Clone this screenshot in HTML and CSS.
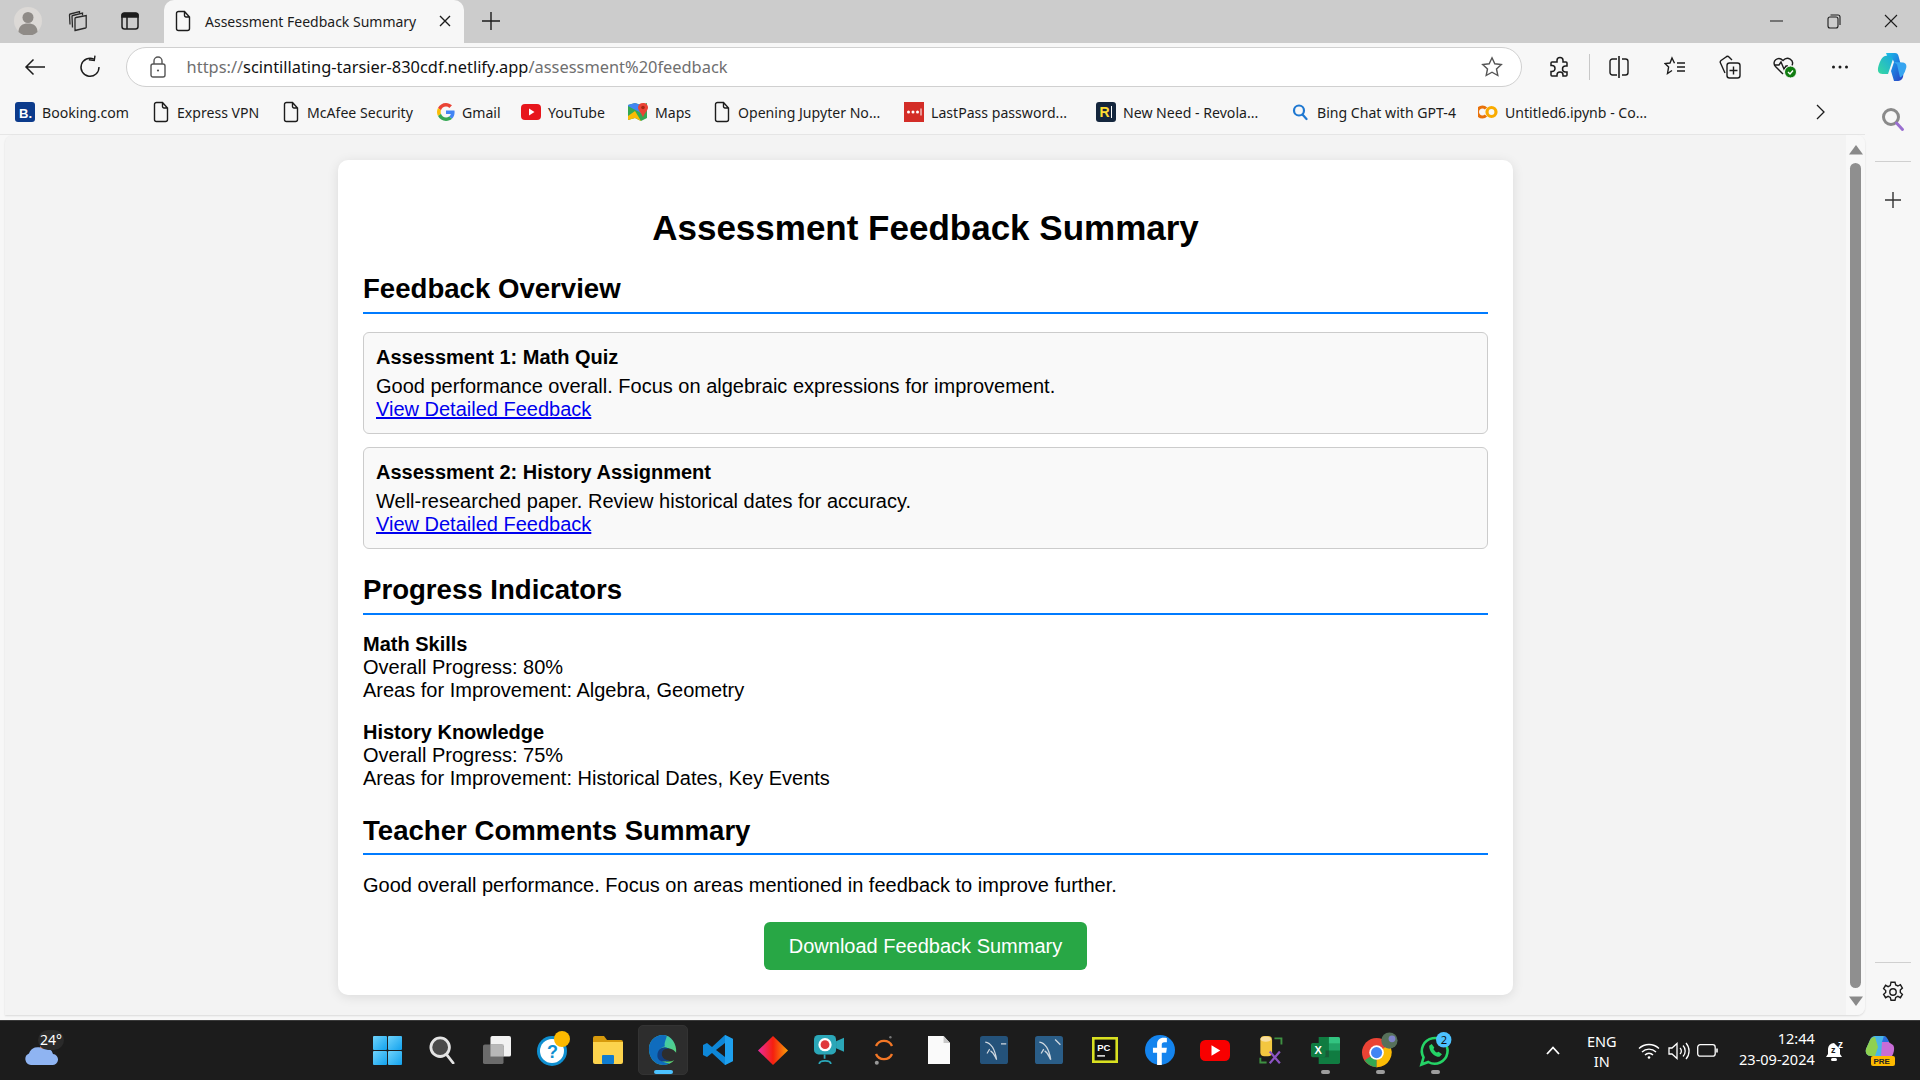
FILE: index.html
```html
<!DOCTYPE html>
<html lang="en">
<head>
<meta charset="utf-8">
<title>Assessment Feedback Summary</title>
<link rel="stylesheet" href="styles.css">
</head>
<body>
<svg class="defs" width="0" height="0" aria-hidden="true">
  <defs>
    <symbol id="doc" viewBox="0 0 18 22"><path d="M2.500 3.500a2 2 0 0 1 2-2h6l5 5.500v11.500a2 2 0 0 1-2 2h-9a2 2 0 0 1-2-2zM10.500 1.500v4a1.500 1.500 0 0 0 1.500 1.500h3.500" fill="none" stroke="#1c1c1c" stroke-width="1.400"/></symbol>
    <linearGradient id="cop" x1="0" y1="0" x2="1" y2="1"><stop offset="0" stop-color="#19c3e8"/><stop offset=".5" stop-color="#1f7fe0"/><stop offset="1" stop-color="#2a3fc0"/></linearGradient>
    <linearGradient id="cop2" x1="0" y1="1" x2="1" y2="0"><stop offset="0" stop-color="#38d9a0"/><stop offset="1" stop-color="#18a8e0"/></linearGradient>
    <linearGradient id="edge" x1="0" y1="0" x2="1" y2="1"><stop offset="0" stop-color="#2ec4d6"/><stop offset="1" stop-color="#63d463"/></linearGradient>
    <linearGradient id="rhomb" x1="0" y1="0" x2="1" y2="0"><stop offset="0" stop-color="#e92ba0"/><stop offset=".5" stop-color="#f5200f"/><stop offset="1" stop-color="#f8a008"/></linearGradient>
    <linearGradient id="win" x1="0" y1="0" x2="1" y2="1"><stop offset="0" stop-color="#6fd3fb"/><stop offset="1" stop-color="#12a2ee"/></linearGradient>
  </defs>
</svg>
<div class="window">
  <header class="tabstrip">
    <span class="strip-btn profile"><svg width="28" height="28" viewBox="0 0 28 28"><circle cx="14" cy="14" r="14" fill="#dcd9d6"/><circle cx="14" cy="10.500" r="5.500" fill="#8f8b87"/><path d="M4.500 25c0-6 4-8.500 9.500-8.500s9.500 2.500 9.500 8.500a14 14 0 0 1-19 0z" fill="#8f8b87"/></svg></span>
    <span class="strip-btn"><svg width="22" height="22" viewBox="0 0 22 22" fill="none" stroke="#2a2a2a" stroke-width="1.300"><path d="M8 20.500l10.500-2.500a1 1 0 0 0 .7-1.200V5.500L9 7.500a1 1 0 0 0-1 1z"/><path d="M5.500 17.500L5 6.500a1 1 0 0 1 .8-1L15.500 3v2.500"/><path d="M3 14.500L2.500 5a1 1 0 0 1 .8-1L12.500 1.500V3"/></svg></span>
    <span class="strip-btn"><svg width="20" height="20" viewBox="0 0 20 20" fill="none" stroke="#1c1c1c" stroke-width="1.500"><rect x="2" y="2" width="16" height="16" rx="2.500"/><path d="M2 4.500a2 2 0 0 1 2-2h12a2 2 0 0 1 2 2V6H2z" fill="#1c1c1c"/><path d="M7 6v12"/></svg></span>
    <div class="tab">
      <svg class="tab-doc" width="18" height="22"><use href="#doc"/></svg>
      <span class="tab-title">Assessment Feedback Summary</span>
      <svg class="tab-x" width="12" height="12" viewBox="0 0 12 12" stroke="#1c1c1c" stroke-width="1.400"><path d="M1 1l10 10M11 1L1 11"/></svg>
    </div>
    <svg class="tab-new" width="18" height="18" viewBox="0 0 18 18" stroke="#1c1c1c" stroke-width="1.400"><path d="M9 0v18M0 9h18"/></svg>
    <div class="winctl">
      <span class="winbtn"><svg width="13" height="2" viewBox="0 0 13 2" stroke="#1c1c1c"><path d="M0 1h13"/></svg></span>
      <span class="winbtn"><svg width="14" height="15" viewBox="0 0 14 15" fill="none" stroke="#1c1c1c" stroke-width="1.100"><rect x="1" y="3" width="10" height="11" rx="2"/><path d="M3.500 1h7.500a2 2 0 0 1 2 2v8"/></svg></span>
      <span class="winbtn"><svg width="14" height="14" viewBox="0 0 14 14" stroke="#1c1c1c" stroke-width="1.100"><path d="M1 1l12 12M13 1L1 13"/></svg></span>
    </div>
  </header>

  <nav class="toolbar">
    <span class="tool"><svg width="22" height="18" viewBox="0 0 22 18" fill="none" stroke="#1c1c1c" stroke-width="1.500"><path d="M21 9H2M9.500 1.500L2 9l7.500 7.500"/></svg></span>
    <span class="tool"><svg width="22" height="24" viewBox="0 0 22 24" fill="none" stroke="#1c1c1c" stroke-width="1.400"><path d="M15 4.200A9 9 0 1 0 20 12"/><path d="M15.500 .5v5h-5.500" transform="rotate(8 15 4)"/></svg></span>
    <div class="address">
      <svg class="lock" width="16" height="22" viewBox="0 0 16 22" fill="none" stroke="#555" stroke-width="1.400"><rect x="1" y="8" width="14" height="13" rx="2"/><path d="M4 8V5a4 4 0 0 1 8 0v3"/><circle cx="8" cy="14.500" r="1.100" fill="#555" stroke="none"/></svg>
      <span class="url"><span class="dim">https://</span>scintillating-tarsier-830cdf.netlify.app<span class="dim">/assessment%20feedback</span></span>
      <svg class="star" width="22" height="22" viewBox="0 0 22 22" fill="none" stroke="#555" stroke-width="1.400"><path d="M11 1.800l2.800 6 6.500.8-4.800 4.400 1.300 6.500-5.800-3.300-5.800 3.300 1.300-6.500L1.700 8.600l6.500-.8z"/></svg>
    </div>
    <span class="tool ext"><svg width="22" height="24" viewBox="0 0 22 24" fill="none" stroke="#1c1c1c" stroke-width="1.500"><path d="M4 7h5V5.500a3 3 0 0 1 6 0V7h3a1 1 0 0 1 1 1v3h-1.500a3 3 0 0 0 0 6H19v3a1 1 0 0 1-1 1h-3v-1a3 3 0 0 0-6 0v1H4a1 1 0 0 1-1-1v-3.500h1a3 3 0 0 0 0-6H3V8a1 1 0 0 1 1-1z"/></svg></span>
    <span class="tool-sep"></span>
    <span class="tool"><svg width="20" height="22" viewBox="0 0 20 22" fill="none" stroke="#1c1c1c" stroke-width="1.400"><path d="M8 3H3.500A2.500 2.500 0 0 0 1 5.500v11A2.500 2.500 0 0 0 3.500 19H8"/><path d="M10 0v22" stroke-width="1.600"/><path d="M13 3h3.500A2.500 2.500 0 0 1 19 5.500v11a2.500 2.500 0 0 1-2.500 2.500H13"/></svg></span>
    <span class="tool"><svg width="22" height="22" viewBox="0 0 22 22" fill="none" stroke="#1c1c1c" stroke-width="1.400"><path d="M10.500 7.200L8 2 6 7l-5 .6 3.600 3.400-1.100 6.500 4.500-3"/><path d="M13 7h8M13 11h8M13 15h8"/></svg></span>
    <span class="tool"><svg width="22" height="24" viewBox="0 0 22 24" fill="none" stroke="#1c1c1c" stroke-width="1.400"><rect x="8" y="8" width="13" height="15" rx="2.500"/><path d="M14.500 11.500v8M10.500 15.500h8"/><path d="M13 5L10 2a2 2 0 0 0-3 0L2 5.500a2 2 0 0 0-.5 2.500L6 18"/></svg></span>
    <span class="tool"><svg width="26" height="26" viewBox="0 0 26 26" fill="none" stroke="#1c1c1c" stroke-width="1.400"><path d="M11 20l-7.500-7.500c-4.500-5 2.500-11 7.500-6 4.500-5 11.500-.5 9 5"/><path d="M2 11h5l2-3 3 7 2-3h2"/><circle cx="18.500" cy="18" r="6" fill="#107c10" stroke="#f7f7f7" stroke-width="1"/><path d="M16 18l2 2 3-3.500" stroke="#fff"/></svg></span>
    <span class="tool"><svg width="18" height="4" viewBox="0 0 18 4" fill="#1c1c1c"><circle cx="2.500" cy="2" r="1.500"/><circle cx="9" cy="2" r="1.500"/><circle cx="15.500" cy="2" r="1.500"/></svg></span>
    <span class="tool copilot"><svg width="32" height="32" viewBox="0 0 32 32"><path d="M11 2h9c2 0 3 1.200 3.500 3L28 22c1 4-1 8-5 8h-4l-3-10 3-9c-1-3-3-4-6-4z" fill="url(#cop)"/><path d="M10 5C7 6 5 10 3.500 15c-1.500 5 0 8 4 8h5.500l3-9 2-6c-1-3-5-4.500-8-3z" fill="url(#cop2)"/><path d="M19 11l9 .5c3 .500 4 3 3 6-1.500 5-3.500 8-6 9l-3-13z" fill="#37a5f0"/></svg></span>
  </nav>

  <div class="body-row">
    <div class="page-col">
      <nav class="bookmarks">
        <a class="bm"><svg width="20" height="20" viewBox="0 0 20 20"><rect width="20" height="20" rx="3" fill="#0c3b8c"/><text x="4" y="15.500" class="fav-b">B.</text></svg><span>Booking.com</span></a>
        <a class="bm"><svg width="18" height="22"><use href="#doc"/></svg><span>Express VPN</span></a>
        <a class="bm"><svg width="18" height="22"><use href="#doc"/></svg><span>McAfee Security</span></a>
        <a class="bm"><svg width="18" height="18" viewBox="0 0 48 48"><path fill="#EA4335" d="M24 9.500c3.500 0 6.600 1.200 9.100 3.600l6.800-6.800C35.800 2.500 30.300 0 24 0 14.600 0 6.500 5.400 2.600 13.200l7.900 6.200C12.400 13.700 17.700 9.500 24 9.500z"/><path fill="#4285F4" d="M46.900 24.500c0-1.600-.1-3.100-.4-4.500H24v9h12.900c-.6 3-2.200 5.500-4.800 7.200l7.700 6c4.500-4.200 7.100-10.300 7.100-17.700z"/><path fill="#FBBC05" d="M10.500 28.600c-.5-1.400-.8-3-.8-4.600s.3-3.200.8-4.600l-7.900-6.200C.9 16.500 0 20.100 0 24s.9 7.500 2.600 10.800z"/><path fill="#34A853" d="M24 48c6.500 0 11.900-2.100 15.900-5.800l-7.700-6c-2.200 1.500-4.900 2.300-8.100 2.300-6.300 0-11.600-4.200-13.500-9.900l-7.900 6.200C6.500 42.600 14.600 48 24 48z"/></svg><span>Gmail</span></a>
        <a class="bm"><svg width="20" height="16" viewBox="0 0 20 16"><rect width="20" height="16" rx="4" fill="#e7161c"/><path d="M8 4.500l5.500 3.500L8 11.500z" fill="#fff"/></svg><span>YouTube</span></a>
        <a class="bm"><svg width="20" height="20" viewBox="0 0 20 20"><path d="M0 3l7-2 6 2 6-2v15l-6 3-6-3-7 2z" fill="#34a853"/><path d="M7 1l6 2v8L0 4V3z" fill="#4285f4"/><path d="M0 14l7-5 6 10-6-3-7 2z" fill="#fbbc05"/><path d="M15 1c-3 0-5 2-5 4.500 0 3 4 6 5 10 1-4 5-7 5-10C20 3 18 1 15 1z" fill="#ea4335"/><circle cx="15" cy="5.500" r="1.800" fill="#a52714"/></svg><span>Maps</span></a>
        <a class="bm"><svg width="18" height="22"><use href="#doc"/></svg><span>Opening Jupyter No...</span></a>
        <a class="bm"><svg width="20" height="20" viewBox="0 0 20 20"><rect width="20" height="20" fill="#d32d27"/><g fill="#fff"><circle cx="4.500" cy="10" r="1.500"/><circle cx="9" cy="10" r="1.500"/><circle cx="13.500" cy="10" r="1.500"/><rect x="16.500" y="6.500" width="1" height="7"/></g></svg><span>LastPass password...</span></a>
        <a class="bm"><svg width="20" height="20" viewBox="0 0 20 20"><rect width="20" height="20" rx="3" fill="#14263d"/><text x="3.500" y="15" class="fav-r">R</text><rect x="15" y="4" width="1" height="12" fill="#fff"/></svg><span>New Need - Revola...</span></a>
        <a class="bm"><svg width="16" height="18" viewBox="0 0 16 18" fill="none" stroke="#1f78d1" stroke-width="2.200"><circle cx="7" cy="7.500" r="5"/><path d="M10.500 11.500L14.500 16" stroke-linecap="round"/></svg><span class="bing">Bing Chat with GPT-4</span></a>
        <a class="bm"><svg width="20" height="14" viewBox="0 0 20 14" fill="none" stroke-width="3.200"><path d="M8 3.500a5 5 0 1 0 0 7" stroke="#e8710a"/><circle cx="13.500" cy="7" r="4.500" stroke="#f9ab00"/></svg><span>Untitled6.ipynb - Co...</span></a>
        <svg class="bm-more" width="10" height="16" viewBox="0 0 10 16" fill="none" stroke="#1c1c1c" stroke-width="1.300"><path d="M1 1l7 7-7 7"/></svg>
      </nav>
      <main class="viewport">
        <div class="content">
          <article class="card">
            <h1>Assessment Feedback Summary</h1>
            <section class="overview">
              <h2>Feedback Overview</h2>
              <div class="item">
                <h3>Assessment 1: Math Quiz</h3>
                <p>Good performance overall. Focus on algebraic expressions for improvement.</p>
                <a class="link" href="#">View Detailed Feedback</a>
              </div>
              <div class="item">
                <h3>Assessment 2: History Assignment</h3>
                <p>Well-researched paper. Review historical dates for accuracy.</p>
                <a class="link" href="#">View Detailed Feedback</a>
              </div>
            </section>
            <section class="progress">
              <h2>Progress Indicators</h2>
              <div class="skill">
                <strong>Math Skills</strong>
                <span>Overall Progress: 80%</span>
                <span>Areas for Improvement: Algebra, Geometry</span>
              </div>
              <div class="skill">
                <strong>History Knowledge</strong>
                <span>Overall Progress: 75%</span>
                <span>Areas for Improvement: Historical Dates, Key Events</span>
              </div>
            </section>
            <section class="comments">
              <h2>Teacher Comments Summary</h2>
              <p>Good overall performance. Focus on areas mentioned in feedback to improve further.</p>
            </section>
            <div class="actions"><button class="download" type="button">Download Feedback Summary</button></div>
          </article>
        </div>
        <div class="scrollbar">
          <svg width="14" height="10" viewBox="0 0 14 10" fill="#8a8a8a"><path d="M7 0l7 9.500H0z"/></svg>
          <span class="thumb"></span>
          <svg width="14" height="10" viewBox="0 0 14 10" fill="#8a8a8a"><path d="M7 10L0 .5h14z"/></svg>
        </div>
      </main>
    </div>
    <aside class="sidebar">
      <svg class="side-search" width="24" height="26" viewBox="0 0 24 26" fill="none" stroke-width="3"><circle cx="10" cy="10" r="7.500" stroke="#8a8a8a"/><path d="M15.500 16l6 6.500" stroke="#9a6fd0" stroke-linecap="round"/></svg>
      <span class="side-line"></span>
      <svg class="side-plus" width="16" height="16" viewBox="0 0 16 16" stroke="#333" stroke-width="1.400"><path d="M8 0v16M0 8h16"/></svg>
      <span class="side-line bottom"></span>
      <svg class="side-gear" width="22" height="22" viewBox="0 0 22 22" fill="none" stroke="#1c1c1c" stroke-width="1.400"><path d="M9 1.200h4l.7 2.800 2.200 1 2.500-1.300 2 3.400-2.100 1.900v2.400l2.100 1.900-2 3.400-2.500-1.300-2.200 1-.7 2.800H9l-.7-2.800-2.200-1-2.500 1.300-2-3.400 2.100-1.900V9.600L1.600 7.700l2-3.400 2.500 1.300 2.200-1z"/><circle cx="11" cy="11" r="3.200"/></svg>
    </aside>
  </div>

  <footer class="taskbar">
    <div class="weather">
      <svg width="34" height="32" viewBox="0 0 34 32"><rect x="16" y="8" width="10" height="8" fill="#d8641a"/><path d="M7 29a6 6 0 0 1-2-11.500A9 9 0 0 1 19 13a7 7 0 0 1 10 5 5.500 5.500 0 0 1-1 11z" fill="#8fb4f2"/></svg>
      <span class="temp">24°</span>
    </div>
    <div class="apps">
      <span class="app"><svg width="29" height="29" viewBox="0 0 30 30" fill="url(#win)"><rect width="14.500" height="14.500" rx="1"/><rect x="15.500" width="14.500" height="14.500" rx="1"/><rect y="15.500" width="14.500" height="14.500" rx="1"/><rect x="15.500" y="15.500" width="14.500" height="14.500" rx="1"/></svg></span>
      <span class="app"><svg width="26" height="28" viewBox="0 0 28 30" fill="none" stroke="#e4e4e4" stroke-width="3"><circle cx="12" cy="12" r="10" fill="#4a4a4a"/><path d="M19 20l7 9" stroke-linecap="round"/></svg></span>
      <span class="app"><svg width="30" height="28" viewBox="0 0 30 30"><rect x="8" width="22" height="22" rx="2" fill="#f2f2f2"/><rect y="9" width="22" height="21" rx="2" fill="#6b6b6b"/><rect x="8" y="9" width="14" height="13" fill="#b8b8b8"/></svg></span>
      <span class="app"><svg width="38" height="38" viewBox="0 0 38 38"><circle cx="18" cy="20" r="15" fill="#0f8fd0"/><circle cx="18" cy="20" r="12" fill="#fff"/><text x="13" y="27" class="help">?</text><circle cx="28" cy="8" r="8" fill="#fdb900"/></svg></span>
      <span class="app"><svg width="30" height="28" viewBox="0 0 30 28"><path d="M0 2a2 2 0 0 1 2-2h9l3 4h14a2 2 0 0 1 2 2v3H0z" fill="#d79a0c"/><path d="M0 6h30v20a2 2 0 0 1-2 2H2a2 2 0 0 1-2-2z" fill="#fcd34d"/><rect x="9" y="19" width="12" height="9" rx="1" fill="#0f7cd0"/></svg></span>
      <span class="app active"><svg width="30" height="30" viewBox="0 0 30 32"><path d="M15 0C6 0 0 7 0 15c0 9 6 17 15 17 5 0 9-2 12-5-9 4-17-2-14-9 1-3 4-5 8-4 4 .500 7 3 8 5 1-9-5-19-14-19z" fill="url(#edge)"/><path d="M15 0C6 0 0 7 0 15c0 9 6 17 15 17 3 0 5-1 7-2-8 0-14-5-11-13 1-3 3-4 6-5C16 8 18 6 19 1c-1-.500-3-1-4-1z" fill="#0f6cbd"/><path d="M9 22c0-6 4-9 8-9 2 0 3 1 4 2-5-1-8 2-7 7 1 3 4 5 8 5-6 3-13 1-13-5z" fill="#123f80"/></svg><i class="dot blue"></i></span>
      <span class="app"><svg width="30" height="30" viewBox="0 0 30 30"><path d="M22 0l8 4v22l-8 4L9 18l-5 4-4-2V10l4-2 5 4z" fill="#0e87d8"/><path d="M22 0l8 4v22l-8 4z" fill="#1ea0ee"/><path d="M22 8L13 15l9 7z" fill="#1c1c1c"/></svg></span>
      <span class="app"><svg width="30" height="29" viewBox="0 0 30 44" preserveAspectRatio="none"><path d="M15 0l15 22-15 22L0 22z" fill="url(#rhomb)"/></svg></span>
      <span class="app"><svg width="30" height="30" viewBox="0 0 34 34"><rect width="25" height="22" rx="5" fill="#2ba7b8"/><path d="M25 7l9-4v16l-9-4z" fill="#2ba7b8"/><circle cx="12.500" cy="11" r="7.500" fill="#fff"/><circle cx="12.500" cy="11" r="5" fill="#e0393c"/><path d="M12 22v5M6 33c0-5 13-5 13 0" stroke="#2ba7b8" stroke-width="2" fill="none"/></svg></span>
      <span class="app"><svg width="22" height="32" viewBox="0 0 26 40" fill="none"><path d="M3 15a11 11 0 0 1 20 0" stroke="#f37726" stroke-width="3"/><path d="M3 25a11 11 0 0 0 20 0" stroke="#f37726" stroke-width="3"/><circle cx="21" cy="4" r="1.500" fill="#777"/><circle cx="4" cy="36" r="2.500" fill="#999"/></svg></span>
      <span class="app"><svg width="22" height="28" viewBox="0 0 24 28" preserveAspectRatio="none"><path d="M0 0h17l7 7v21H0z" fill="#fafafa"/><path d="M17 0l7 7h-7z" fill="#c8c8c8"/></svg></span>
      <span class="app"><svg width="28" height="28" viewBox="0 0 32 32"><rect width="32" height="32" rx="3" fill="#24527a"/><path d="M6 7c7 1 11 8 13 20-2-3-3-8-7-10M11 15l-3 5M24 9h6" stroke="#cfd8e0" stroke-width="1.300" fill="none"/></svg></span>
      <span class="app"><svg width="28" height="28" viewBox="0 0 32 32"><rect width="32" height="32" rx="3" fill="#2a5d87"/><path d="M5 7c7 1 11 8 13 20-2-3-3-8-7-10M10 15l-3 5M23 4l6 6" stroke="#cfd8e0" stroke-width="1.500" fill="none"/></svg></span>
      <span class="app"><svg width="26" height="26" viewBox="0 0 30 30"><rect width="30" height="30" fill="#d8e021"/><rect x="3" y="3" width="24" height="24" fill="#111"/><text x="6" y="16" class="pc">PC</text><rect x="6" y="21" width="9" height="1.600" fill="#fff"/></svg></span>
      <span class="app"><svg width="30" height="30" viewBox="0 0 34 34"><circle cx="17" cy="17" r="17" fill="#1484ee"/><path d="M19 34V20h5l.8-5.500H19V11c0-1.600.7-2.800 3-2.800h2.800V3.400C24 3.200 22.500 3 21 3c-4.400 0-7.300 2.700-7.300 7.400v4.100H9V20h4.700v14z" fill="#fff"/></svg></span>
      <span class="app"><svg width="30" height="21" viewBox="0 0 34 24" preserveAspectRatio="none"><rect width="34" height="24" rx="6" fill="#f80000"/><path d="M13 6l10 6-10 6z" fill="#fff"/></svg></span>
      <span class="app"><svg width="25" height="28" viewBox="0 0 32 36" preserveAspectRatio="none"><path d="M21 3h9v8M3 28v6h8" stroke="#3e9142" stroke-width="2.400" fill="none"/><rect x="3" width="15" height="26" rx="5" fill="#f3c740"/><ellipse cx="10" cy="4" rx="7" ry="3.500" fill="#f8dfa0"/><path d="M15 20l13 15M28 20L15 35" stroke="#8c54c4" stroke-width="2.800"/></svg></span>
      <span class="app"><svg width="29" height="27" viewBox="0 0 34 32" preserveAspectRatio="none"><path d="M9 0h23a2 2 0 0 1 2 2v28a2 2 0 0 1-2 2H9z" fill="#107c41"/><path d="M21 0h11a2 2 0 0 1 2 2v6H21z" fill="#33c481"/><path d="M21 8h13v8H21z" fill="#21a366"/><path d="M9 16h12v8H9z" fill="#185c37"/><rect y="7" width="17" height="17" rx="2" fill="#107c41"/><text x="4" y="20.500" class="xl">X</text></svg><i class="dot"></i></span>
      <span class="app"><svg width="36" height="36" viewBox="0 0 42 42"><circle cx="17" cy="24" r="17" fill="#ea4335"/><path d="M17 24L32 15a17 17 0 0 1-15 26z" fill="#fbbc05"/><path d="M17 24l-14 9a17 17 0 0 0 14 8z" fill="#34a853"/><circle cx="17" cy="24" r="8.500" fill="#fff"/><circle cx="17" cy="24" r="6.500" fill="#4285f4"/><circle cx="32" cy="10" r="9.500" fill="#56705a"/><circle cx="35" cy="8" r="4" fill="#7e83c9"/></svg><i class="dot"></i></span>
      <span class="app"><svg width="36" height="36" viewBox="0 0 42 42" fill="none"><path d="M4 38l2.500-8.500A15 15 0 1 1 12 35z" stroke="#25d366" stroke-width="3"/><path d="M13 16c0 7 6 13 12 13l3-3-4-3-2 1c-2-1-3-3-4-4l1-2-3-4z" fill="#25d366"/><circle cx="30" cy="9" r="9" fill="#4cc2ff"/><text x="26.500" y="14" class="badge">2</text></svg><i class="dot"></i></span>
    </div>
    <div class="tray">
      <svg class="chev" width="14" height="9" viewBox="0 0 14 9" fill="none" stroke="#fff" stroke-width="1.800"><path d="M1 8l6-6.500L13 8"/></svg>
      <div class="lang"><span>ENG</span><span>IN</span></div>
      <svg class="t-wifi" width="22" height="16" viewBox="0 0 22 16" fill="none" stroke="#fff" stroke-width="1.400"><path d="M1 5.500a14.500 14.500 0 0 1 20 0M4 9a10 10 0 0 1 14 0M7 12a5.500 5.500 0 0 1 8 0"/><circle cx="11" cy="14.500" r="1.300" fill="#fff" stroke="none"/></svg>
      <svg class="t-vol" width="22" height="18" viewBox="0 0 22 18" fill="none" stroke="#fff" stroke-width="1.300"><path d="M1 6v6h3l5 4.500V1.500L4 6z"/><path d="M12 6a4 4 0 0 1 0 6M15 3.500a8 8 0 0 1 0 11M18 1a12 12 0 0 1 0 16"/></svg>
      <svg class="t-bat" width="21" height="13" viewBox="0 0 21 13" fill="none" stroke="#fff" stroke-width="1.300"><rect x=".7" y=".7" width="17.500" height="11.500" rx="2.500"/><path d="M20 4.500v4" stroke-width="1.600"/></svg>
      <div class="clock"><span>12:44</span><span>23-09-2024</span></div>
      <svg class="t-bell" width="20" height="22" viewBox="0 0 20 22"><path d="M8 3a6 6 0 0 0-6 6v5l-2 3h16l-2-3V9" fill="#fff"/><rect x="5" y="18" width="6" height="3" rx="1.500" fill="#fff"/><text x="5" y="13" class="zz">z</text><text x="12" y="8" class="zz2">z</text></svg>
      <svg class="t-copilot" width="30" height="30" viewBox="0 0 30 30"><path d="M10 0h8c2 0 3 1 4 3l3 5-8 12H6c-4 0-6-3-5-7L5 4c1-3 3-4 5-4z" fill="#48b5e8"/><path d="M1 13L5 4c1-2 3-3 5-3l3 10-3 9H6c-4 0-6-3-5-7z" fill="#8fd14f"/><path d="M17 6l5-1 6 4c2 2 1 8-1 11l-11 1z" fill="#c86dd7"/><path d="M19 0c2 0 4 3 5 6h-7z" fill="#2c6fe0"/><rect x="6" y="20" width="24" height="10" rx="2" fill="#fdb900"/><text x="8.500" y="28" class="pre">PRE</text></svg>
    </div>
  </footer>
</div>
</body>
</html>
```
FILE: styles.css
```css
* { box-sizing: border-box; }
html, body { margin: 0; height: 100%; overflow: hidden; }
body { font-family: "Liberation Sans", Arial, sans-serif; }
.defs { display: block; height: 0; }
.window { width: 1920px; height: 1080px; display: flex; flex-direction: column; background: #f7f7f7; }

/* Tab strip */
.tabstrip { height: 43px; flex: none; background: #cccccc; display: flex; align-items: center; padding-left: 3px; padding-bottom: 1px; }
.strip-btn { width: 50px; display: flex; justify-content: center; }
.strip-btn.profile { width: 50px; }
.strip-btn + .strip-btn { width: 49px; }
.strip-btn + .strip-btn + .strip-btn { width: 55px; }
.tab { width: 300px; height: 43px; margin: 0 0 -1px 7px; background: #f7f7f7; border-radius: 10px 10px 0 0; display: flex; align-items: center; padding: 0 13px 1px 10px; font: 14px "Noto Sans", sans-serif; color: #1c1c1c; }
.tab-title { margin-left: 13px; flex: 1; white-space: nowrap; }
.tab-new { margin-left: 18px; }
.winctl { margin-left: auto; display: flex; padding-right: 1px; }
.winbtn { width: 57px; display: flex; justify-content: center; align-items: center; }

/* Toolbar */
.toolbar { height: 47px; flex: none; display: flex; align-items: center; padding-left: 7px; }
.tool { width: 55.300px; display: flex; justify-content: center; align-items: center; flex: none; }
.tool.ext { margin-left: 9px; width: 56px; }
.tool-sep { width: 1px; height: 26px; background: #c8c8c8; margin: 0 2px; flex: none; }
.tool.copilot { width: 45px; }
.address { width: 1396px; height: 40px; margin-left: 8px; flex: none; background: #fff; border: 1px solid #d0d0d0; border-radius: 20px; display: flex; align-items: center; padding: 0 18px 0 23px; }
.url { margin-left: 21px; flex: 1; font: 16.400px "Noto Sans", sans-serif; color: #111; white-space: nowrap; }
.dim { color: #6f6f6f; }

/* Bookmarks */
.body-row { flex: 1; display: flex; min-height: 0; }
.page-col { width: 1865px; flex: none; display: flex; flex-direction: column; }
.bookmarks { height: 45px; flex: none; display: grid; grid-template-columns: 137px 130px 155px 84px 107px 85px 191px 192px 196px 186px 338px 10px; align-items: center; padding-left: 15px; border-bottom: 1px solid #e6e6e6; font: 14.100px "Noto Sans", sans-serif; color: #1c1c1c; }
.bm { display: flex; align-items: center; gap: 7px; white-space: nowrap; }
.bing { margin-left: 2px; }
.bm-more { justify-self: center; }
.fav-b { font: bold 13px "Liberation Sans", sans-serif; fill: #fff; }
.fav-r { font: bold 14px "Liberation Sans", sans-serif; fill: #ffdd33; }

/* Main */
.viewport { height: 880px; margin-left: 5px; display: flex; background: #f3f3f3; border-radius: 8px 8px 8px 0; box-shadow: 0 1px 2px rgba(0,0,0,.12); flex: none; }
.content { flex: 1; padding-top: 25px; display: flex; justify-content: center; }
.scrollbar { width: 19px; background: #f8f8f8; display: flex; flex-direction: column; align-items: center; padding: 10px 0 9px; gap: 8px; border-radius: 0 8px 8px 0; }
.thumb { flex: 1; width: 11px; background: #8f8f8f; border-radius: 6px; }
.sidebar { flex: 1; display: flex; flex-direction: column; align-items: center; padding-top: 17px; }
.side-line { width: 36px; height: 1px; background: #d0d0d0; margin-top: 28px; }
.side-plus { margin-top: 30px; }
.side-line.bottom { margin-top: auto; }
.side-gear { margin: 18px 0 17px; }

/* Card */
.card { width: 1175px; height: 835px; background: #fff; border-radius: 10px; box-shadow: 0 2px 12px rgba(0,0,0,.1); padding: 0 25px; color: #000; font-size: 20px; line-height: 23px; }
h1 { margin: 46px 0 0; font-size: 35px; line-height: 44px; text-align: center; }
h2 { margin: 0; font-size: 27.600px; line-height: 33px; padding-bottom: 7px; border-bottom: 2px solid #007bff; }
.overview { margin-top: 22px; }
.item { height: 102px; margin-top: 13px; padding: 13px 12px; background: #f9f9f9; border: 1px solid #cccccc; border-radius: 6px; }
.overview h2 + .item { margin-top: 18px; }
h3 { margin: 0 0 7px; font-size: 20px; line-height: 22px; }
p { margin: 0; }
.link { color: #0000ee; text-decoration: underline; }
.progress { margin-top: 24px; }
.skill { display: flex; flex-direction: column; margin-top: 18px; }
.skill + .skill { margin-top: 19px; }
.skill strong { font-weight: bold; }
.comments { margin-top: 24px; }
.comments h2 { padding-bottom: 6px; }
.comments p { margin-top: 19px; }
.actions { display: flex; justify-content: center; margin-top: 25px; }
.download { width: 323px; height: 48px; border: 0; border-radius: 6px; background: #28a745; color: #fff; font: 20px "Liberation Sans", sans-serif; }

/* Taskbar */
.taskbar { height: 60px; flex: none; background: #1c1c1c; border-top: 1px solid #3a3a3a; display: flex; align-items: center; color: #fff; font: 14.500px "Noto Sans", sans-serif; }
.weather { width: 359.500px; padding-left: 24px; display: flex; align-items: flex-end; position: relative; height: 100%; padding-bottom: 12px; flex: none; }
.temp { position: absolute; left: 38px; top: 9px; background: #2a2a2a; border-radius: 10px; padding: 0 2px; font-size: 14px; line-height: 20px; }
.apps { display: flex; height: 100%; flex: none; }
.app { width: 55.200px; height: 100%; display: flex; justify-content: center; align-items: center; position: relative; padding-bottom: 1px; }
.app.active::before { content: ""; position: absolute; inset: 4px 2.500px 5px; background: #2d2d2d; border-radius: 5px; border: 1px solid #333; }
.app svg { position: relative; }
.dot { position: absolute; left: 50%; bottom: 6px; width: 9px; margin-left: -4.500px; height: 4px; border-radius: 2px; background: #9d9d9d; }
.dot.blue { width: 19px; margin-left: -9.500px; background: #4cc2ff; }
.tray { flex: 1; display: flex; align-items: center; padding-left: 82.500px; height: 100%; }
.lang { display: flex; flex-direction: column; align-items: center; width: 34px; margin-left: 25px; line-height: 20px; }
.t-wifi { margin-left: 19px; }
.t-vol { margin-left: 8px; }
.t-bat { margin-left: 7px; }
.clock { display: flex; flex-direction: column; align-items: flex-end; width: 92px; margin: -4px 0 0 5px; line-height: 21px; }
.t-bell { margin-left: 11px; }
.t-copilot { margin-left: 19px; }
.help { font: bold 18px "Liberation Sans", sans-serif; fill: #0f8fd0; }
.pc { font: bold 11px "Liberation Sans", sans-serif; fill: #fff; }
.xl { font: bold 13px "Liberation Sans", sans-serif; fill: #fff; }
.badge { font: 13px "Noto Sans", sans-serif; fill: #111; }
.zz { font: bold 9px "Liberation Sans", sans-serif; fill: #1c1c1c; }
.zz2 { font: bold 10px "Liberation Sans", sans-serif; fill: #fff; }
.pre { font: bold 8px "Liberation Sans", sans-serif; fill: #222; }
```
